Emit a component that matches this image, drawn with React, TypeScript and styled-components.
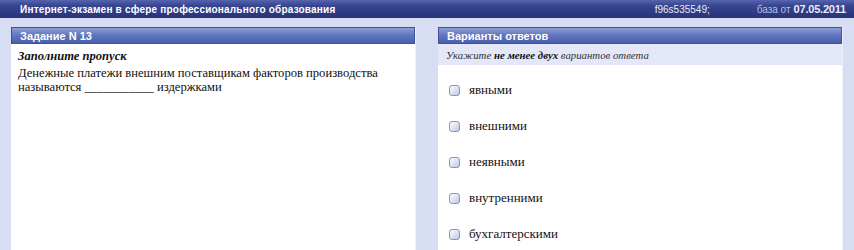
import styled, { createGlobalStyle } from "styled-components";

const serif = `"Liberation Serif", "Times New Roman", serif`;
const sans = `"Liberation Sans", Arial, sans-serif`;

const GlobalStyle = createGlobalStyle`
  html, body {
    margin: 0;
    padding: 0;
    background: #d7ddf2;
  }
`;

const Page = styled.div`
  width: 854px;
  height: 250px;
  overflow: hidden;
  display: flex;
  flex-direction: column;
  background: #d7ddf2;
`;

const TopBar = styled.div`
  flex: 0 0 18px;
  display: flex;
  align-items: center;
  padding: 0 8px 0 20px;
  background: linear-gradient(#5764b0 0%, #38458f 30%, #27327a 100%);
  font-family: ${sans};
  font-size: 10px;
  color: #ffffff;
`;

const Title = styled.span`
  font-weight: bold;
  margin-right: auto;
  letter-spacing: 0.2px;
`;

const Meta = styled.span<{ $strong?: boolean; $muted?: boolean }>`
  font-weight: ${(p) => (p.$strong ? "bold" : "normal")};
  color: ${(p) => (p.$muted ? "#b6bedf" : "#e8ebf8")};
  margin-left: ${(p) => (p.$strong ? "3px" : "0")};
  font-size: ${(p) => (p.$strong ? "11px" : "10px")};
  letter-spacing: ${(p) => (p.$strong ? "-0.2px" : "0")};
`;

const Gap = styled.span`
  width: 47px;
`;

const Columns = styled.div`
  flex: 1;
  min-height: 0;
  display: flex;
  gap: 22px;
  padding: 9px 11px 0 11px;
`;

const Panel = styled.div`
  flex: 1;
  display: flex;
  flex-direction: column;
  background: #ffffff;
  border-right: 1px solid #eef0f8;
`;

const PanelHeader = styled.div`
  flex: 0 0 17px;
  box-sizing: border-box;
  display: flex;
  align-items: center;
  padding-left: 8px;
  background: linear-gradient(#8d9fd6 0%, #6378c0 45%, #4a5fae 100%);
  border: 1px solid #3d50a0;
  font-family: ${sans};
  font-weight: bold;
  font-size: 11px;
  color: #ffffff;
`;

const Question = styled.div`
  padding: 5px 7px;
  font-family: ${serif};
  font-size: 12.6px;
  line-height: 14px;
  color: #111111;
`;

const QuestionTitle = styled.div`
  font-weight: bold;
  font-style: italic;
  margin-bottom: 3px;
`;

const Hint = styled.div`
  flex: 0 0 21px;
  display: flex;
  align-items: center;
  padding-left: 8px;
  background: #e3e7f7;
  font-family: ${serif};
  font-style: italic;
  font-size: 10.8px;
  color: #333333;

  b {
    color: #111111;
  }
`;

const Options = styled.div`
  display: flex;
  flex-direction: column;
  padding: 7px 0 0 11px;
`;

const Option = styled.label`
  height: 36px;
  flex-shrink: 0;
  display: flex;
  align-items: center;
  gap: 9px;
  font-family: ${serif};
  font-size: 13px;
  color: #111111;
`;

function CheckBox() {
  return (
    <svg width="11" height="11" viewBox="0 0 11 11">
      <defs>
        <linearGradient id="cb" x1="0" y1="0" x2="1" y2="1">
          <stop offset="0" stopColor="#ffffff" />
          <stop offset="0.5" stopColor="#dfe4f2" />
          <stop offset="1" stopColor="#b9c3df" />
        </linearGradient>
      </defs>
      <rect
        x="0.5"
        y="0.5"
        width="10"
        height="10"
        rx="2.5"
        fill="url(#cb)"
        stroke="#8a97bd"
      />
    </svg>
  );
}

const answers = ["явными", "внешними", "неявными", "внутренними", "бухгалтерскими"];

export default function App() {
  return (
    <>
      <GlobalStyle />
      <Page>
        <TopBar>
          <Title>Интернет-экзамен в сфере профессионального образования</Title>
          <Meta>f96s535549;</Meta>
          <Gap />
          <Meta $muted>база от</Meta>
          <Meta $strong>07.05.2011</Meta>
        </TopBar>
        <Columns>
          <Panel>
            <PanelHeader>Задание N 13</PanelHeader>
            <Question>
              <QuestionTitle>Заполните пропуск</QuestionTitle>
              Денежные платежи внешним поставщикам факторов производства
              <br />
              называются ___________ издержками
            </Question>
          </Panel>
          <Panel>
            <PanelHeader>Варианты ответов</PanelHeader>
            <Hint>
              Укажите&nbsp;<b>не менее двух</b>&nbsp;вариантов ответа
            </Hint>
            <Options>
              {answers.map((a) => (
                <Option key={a}>
                  <CheckBox />
                  {a}
                </Option>
              ))}
            </Options>
          </Panel>
        </Columns>
      </Page>
    </>
  );
}
